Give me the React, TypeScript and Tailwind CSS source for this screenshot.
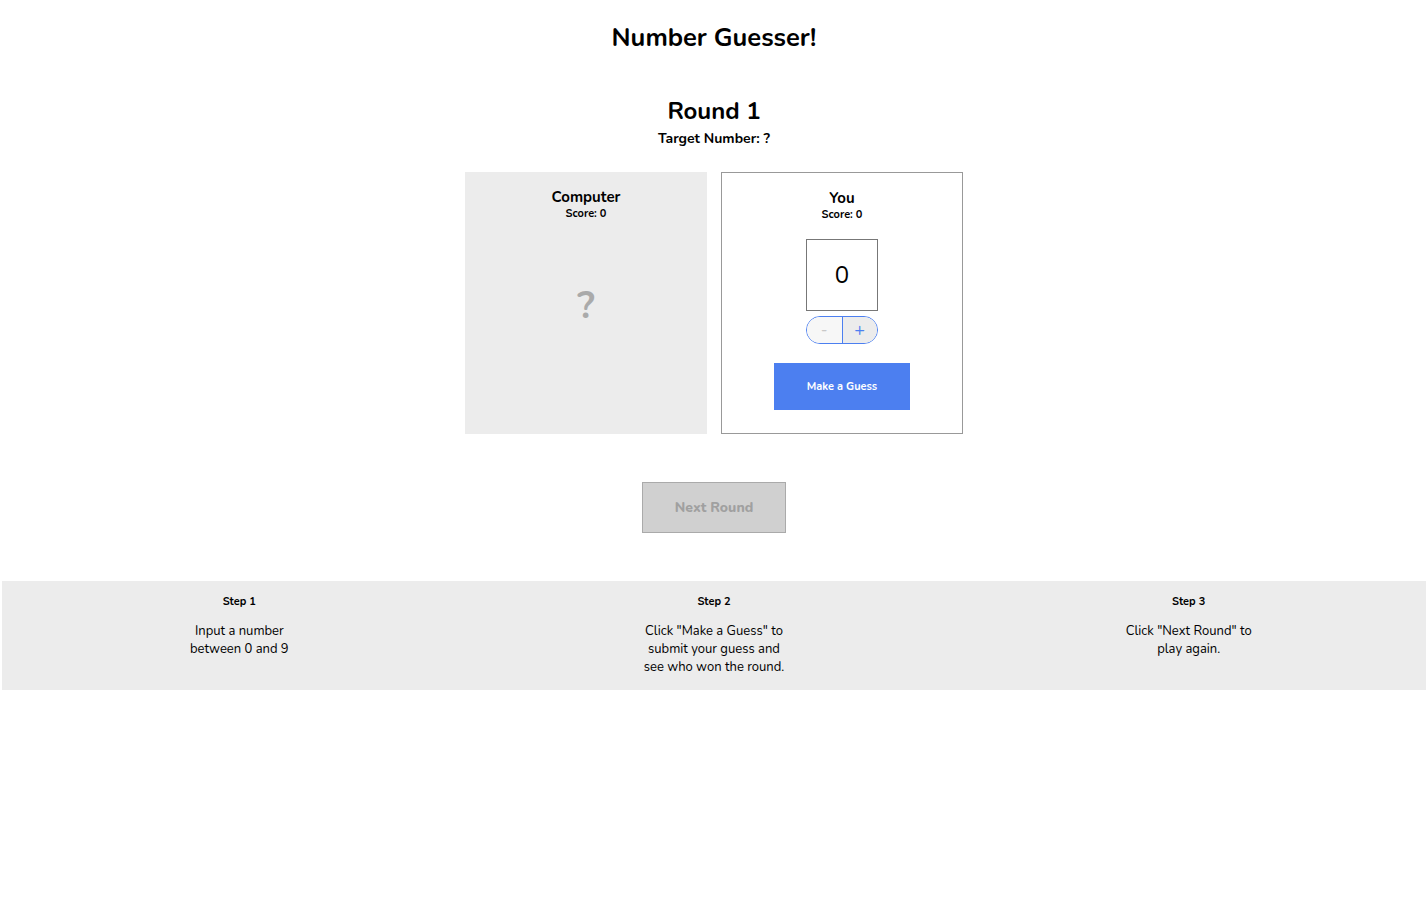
import React, { useState } from 'react';

const steps = [
  { title: 'Step 1', lines: ['Input a number', 'between 0 and 9'] },
  { title: 'Step 2', lines: ['Click "Make a Guess" to', 'submit your guess and', 'see who won the round.'] },
  { title: 'Step 3', lines: ['Click "Next Round" to', 'play again.'] },
];

const App = () => {
  const [guess, setGuess] = useState(0);
  const [round] = useState(1);

  return (
    <div className="min-h-screen w-full bg-white text-black font-['Nunito','Open_Sans',sans-serif] pt-[22px]">
      <h1 className="text-center text-[25.5px] leading-8 font-bold">Number Guesser!</h1>

      <h2 className="text-center text-[24px] leading-8 font-bold mt-[41px]">Round {round}</h2>
      <p className="text-center text-[14px] leading-5 font-bold mt-[2px]">Target Number: ?</p>

      <div className="flex justify-center gap-[14px] mt-[23px]">
        {/* Computer card */}
        <div className="w-[242px] h-[262px] bg-[#ececec] flex flex-col items-center pt-[15px]">
          <h3 className="text-[15px] leading-5 font-bold">Computer</h3>
          <p className="text-[11px] leading-[14px] font-bold">Score: 0</p>
          <span className="mt-[65px] text-[38px] leading-10 font-bold text-[#aaaaaa]">?</span>
        </div>

        {/* Player card */}
        <div className="w-[242px] h-[262px] border border-[#999] flex flex-col items-center pt-[15px]">
          <h3 className="text-[15px] leading-5 font-bold">You</h3>
          <p className="text-[11px] leading-[14px] font-bold">Score: 0</p>
          <div className="mt-[17px] w-[72px] h-[72px] border border-[#777] flex items-center justify-center text-[24px]">
            {guess}
          </div>
          <div className="mt-[5px] w-[72px] h-[28px] flex rounded-full border border-[#4c7ff0] overflow-hidden">
            <button
              onClick={() => setGuess(Math.max(0, guess - 1))}
              className="flex-1 bg-[#f7f7f7] text-[#c8c8c8] text-[16px] leading-none border-r border-[#4c7ff0]"
            >
              -
            </button>
            <button
              onClick={() => setGuess(Math.min(9, guess + 1))}
              className="flex-1 bg-[#ececec] text-[#4c7ff0] text-[18px] leading-none"
            >
              +
            </button>
          </div>
          <button className="mt-[19px] w-[136px] h-[47px] pt-[2px] bg-[#4c7ff0] text-white text-[11px] font-bold">
            Make a Guess
          </button>
        </div>
      </div>

      <div className="flex justify-center mt-12">
        <button className="w-[144px] h-[51px] bg-[#d0d0d0] border border-[#aaa] text-[#a0a0a0] text-[14px] font-extrabold">
          Next Round
        </button>
      </div>

      <div className="mx-[2px] mt-12 bg-[#ececec] grid grid-cols-3 pt-[14px] pb-[14px]">
        {steps.map((step) => (
          <div key={step.title} className="flex flex-col items-center text-center">
            <h4 className="text-[11px] leading-[14px] font-bold">{step.title}</h4>
            <p className="mt-[13px] text-[13px] leading-[18px]">
              {step.lines.map((line) => (
                <span key={line} className="block">{line}</span>
              ))}
            </p>
          </div>
        ))}
      </div>
    </div>
  );
};

export default App;
